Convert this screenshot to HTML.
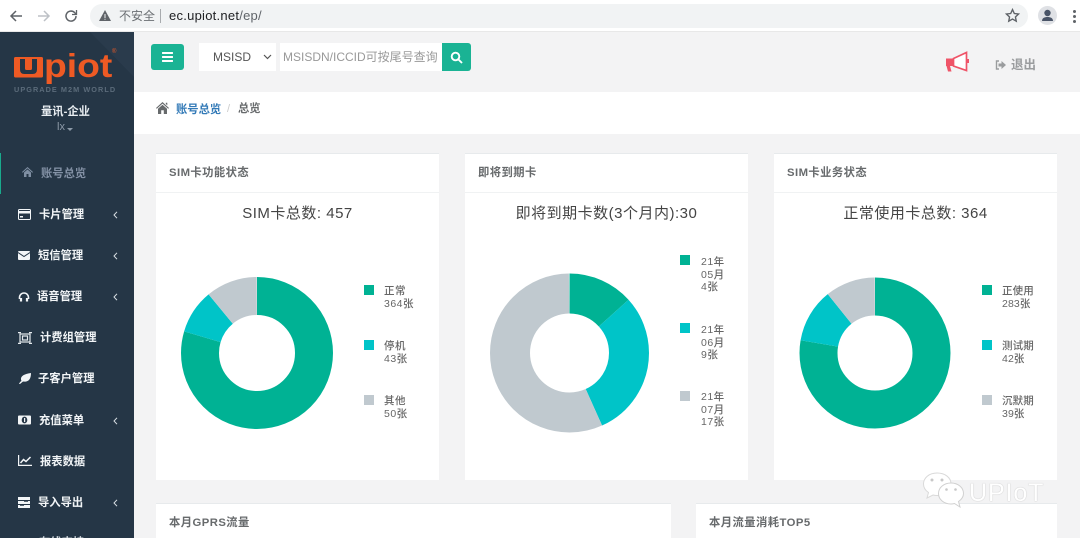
<!DOCTYPE html>
<html lang="zh"><head><meta charset="utf-8"><title>UPIoT</title>
<style>
html,body{margin:0;padding:0;width:1080px;height:538px;overflow:hidden;background:#f3f3f4;font-family:"Liberation Sans","Noto Sans CJK SC",sans-serif;}
#root{position:absolute;left:0;top:0;width:1080px;height:538px;overflow:hidden;background:#f3f3f4}
.a{position:absolute;white-space:nowrap;line-height:1}
#chrome{position:absolute;left:0;top:0;width:1080px;height:32px;background:#fff;border-bottom:1px solid #e8e8e8;box-sizing:border-box}
#url{position:absolute;left:90px;top:4px;width:938px;height:24px;border-radius:12px;background:#f1f3f4}
#side{position:absolute;left:0;top:32px;width:134px;height:506px;background:#253646;overflow:hidden}
.m{position:absolute;color:#f2f5f7;font-size:11.3px;font-weight:bold;line-height:14px;white-space:nowrap}
.card{position:absolute;background:#fff;border-top:1px solid #e7eaec;box-sizing:border-box}
.h{position:absolute;left:13px;top:12px;font-size:11.3px;font-weight:bold;color:#676a6c;line-height:14px;white-space:nowrap;letter-spacing:.45px}
.l{position:absolute;left:0;right:0;top:38px;height:1px;background:#f0f2f3}
.t{position:absolute;left:0;width:100%;text-align:center;top:50px;font-size:15px;color:#444;line-height:20px;white-space:nowrap;letter-spacing:.5px}
.sq{position:absolute;width:10px;height:10px}
.lg{position:absolute;font-size:10.5px;line-height:12.6px;color:#666;white-space:nowrap;letter-spacing:.5px;font-weight:500}
.ic{position:absolute}
</style></head><body>
<div id="root">
<div id="chrome">
<svg class="ic" style="left:8px;top:8px" width="16" height="16" viewBox="0 0 16 16" fill="none" stroke="#5f6368" stroke-width="1.5"><path d="M14 8H3M8 3 3 8l5 5"/></svg>
<svg class="ic" style="left:36px;top:8px" width="16" height="16" viewBox="0 0 16 16" fill="none" stroke="#bdc1c6" stroke-width="1.5"><path d="M2 8h11M8 3l5 5-5 5"/></svg>
<svg class="ic" style="left:63px;top:8px" width="16" height="16" viewBox="0 0 16 16" fill="none" stroke="#5f6368" stroke-width="1.5"><path d="M13 8a5 5 0 1 1-1.500-3.500L13 6"/><path d="M13.500 2v4.500H9" stroke-width="1.300"/></svg>
<div id="url"></div>
<svg class="ic" style="left:99px;top:10px" width="12" height="11" viewBox="0 0 12 11"><path d="M6 0 12 11H0z" fill="#5f6368"/><path d="M5.500 4h1v4h-1zM5.500 8.700h1v1h-1z" fill="#f1f3f4"/></svg>
<div class="a" style="left:119px;top:10px;font-size:12px;color:#6b6f73">不安全</div>
<div class="a" style="left:160px;top:9px;width:1px;height:14px;background:#a8abae"></div>
<div class="a" style="left:169px;top:9px;font-size:13px;color:#202124;letter-spacing:.25px">ec.upiot.net<span style="color:#5f6368">/ep/</span></div>
<svg class="ic" style="left:1005px;top:8px" width="15" height="15" viewBox="0 0 24 24" fill="none" stroke="#5f6368" stroke-width="2.200"><path d="M12 2.500l2.900 6.300 6.800.8-5 4.700 1.300 6.800-6-3.400-6 3.400 1.300-6.800-5-4.700 6.800-.8z"/></svg>
<div class="a" style="left:1038px;top:6px;width:19px;height:19px;border-radius:50%;background:#dfe1e5"></div>
<svg class="ic" style="left:1040px;top:8px" width="15" height="15" viewBox="0 0 15 15"><circle cx="7.500" cy="5" r="3.200" fill="#4a5568"/><path d="M2 13c0-3 2.500-4 5.500-4s5.500 1 5.500 4z" fill="#4a5568"/></svg>
<div class="a" style="left:1073px;top:10px;width:3px;height:3px;border-radius:50%;background:#5f6368"></div>
<div class="a" style="left:1073px;top:15px;width:3px;height:3px;border-radius:50%;background:#5f6368"></div>
<div class="a" style="left:1073px;top:20px;width:3px;height:3px;border-radius:50%;background:#5f6368"></div>
</div>

<div id="side">
<svg class="ic" style="left:0;top:0" width="134" height="120"><path d="M90 0 134 45V0z" fill="#2a3b4c"/></svg>
<svg class="ic" style="left:14px;top:25px" width="30" height="21" viewBox="0 0 30 21"><rect width="29" height="20.500" rx="1.500" fill="#ee5a24"/><path d="M6 2v10.500q0 4.500 4.500 4.500h8q4.500 0 4.500-4.500V2h-5v9.500q0 1.500-1.500 1.500h-4q-1.500 0-1.500-1.500V2z" fill="#253646"/></svg>
<div class="a" style="left:44px;top:17px;font-size:33px;font-weight:bold;color:#ee5a24;transform:scaleX(1.13);transform-origin:left">piot</div>
<div class="a" style="left:112px;top:17px;font-size:6px;color:#ee5a24">®</div>
<div class="a" style="left:14px;top:54px;font-size:7.3px;font-weight:bold;color:#5b6b7a;letter-spacing:1.05px">UPGRADE M2M WORLD</div>
<div class="a" style="left:41px;top:75px;font-size:11.3px;font-weight:bold;color:#e8edf1">量讯-企业</div>
<div class="a" style="left:57px;top:90px;font-size:11px;color:#8d9aa8">lx</div>
<div class="a" style="left:67px;top:96px;width:0;height:0;border:3px solid transparent;border-top-color:#8d9aa8"></div>

<div class="a" style="left:0;top:121px;width:1px;height:41px;background:#19aa8d"></div>
<svg class="ic" style="left:22px;top:135px" width="11" height="10" viewBox="0 0 11 10" fill="#7f8fa3"><path d="M5.500 0 11 5l-.7.700-4.800-4.300L.7 5.700 0 5zM2 5.500 5.500 2.500 9 5.500V10H6.500V7h-2v3H2z"/></svg>
<div class="m" style="left:41px;top:135px;color:#8492a6">账号总览</div>

<svg class="ic" style="left:18px;top:177px" width="13" height="11" viewBox="0 0 13 11"><rect x=".5" y=".5" width="12" height="10" rx="1" fill="#253646" stroke="#f2f5f7"/><rect x="0" y="2" width="13" height="2.500" fill="#f2f5f7"/><rect x="2" y="7" width="3" height="1.500" fill="#f2f5f7"/></svg>
<div class="m" style="left:39px;top:176px">卡片管理</div>
<svg class="ic" style="left:113px;top:179px" width="5" height="8" viewBox="0 0 5 8" fill="none" stroke="#d9dfe4" stroke-width="1"><path d="M4 .8 1 4l3 3.200"/></svg>

<svg class="ic" style="left:18px;top:219px" width="12" height="9" viewBox="0 0 12 9"><rect width="12" height="9" rx="1" fill="#f2f5f7"/><path d="M0 1.500 6 5.500 12 1.500" fill="none" stroke="#253646" stroke-width="1"/></svg>
<div class="m" style="left:38px;top:217px">短信管理</div>
<svg class="ic" style="left:113px;top:220px" width="5" height="8" viewBox="0 0 5 8" fill="none" stroke="#d9dfe4" stroke-width="1"><path d="M4 .8 1 4l3 3.200"/></svg>

<svg class="ic" style="left:18px;top:260px" width="12" height="10" viewBox="0 0 12 10" fill="none" stroke="#f2f5f7" stroke-width="1.600"><path d="M1.500 7V5.500a4.500 4.500 0 0 1 9 0V7"/><path d="M3 6v3.500M9 6v3.500" stroke-width="2.200"/></svg>
<div class="m" style="left:37px;top:258px">语音管理</div>
<svg class="ic" style="left:113px;top:261px" width="5" height="8" viewBox="0 0 5 8" fill="none" stroke="#d9dfe4" stroke-width="1"><path d="M4 .8 1 4l3 3.200"/></svg>

<svg class="ic" style="left:18px;top:300px" width="14" height="12" viewBox="0 0 14 12" fill="none" stroke="#e4e9ed" stroke-width="1.200"><rect x="2" y="2" width="10" height="8"/><rect x="4.500" y="4" width="5" height="4"/><path d="M0 .6h3M11 .6h3M0 11.400h3M11 11.400h3" stroke-width="1.200"/></svg>
<div class="m" style="left:40px;top:299px">计费组管理</div>

<svg class="ic" style="left:19px;top:341px" width="12" height="11" viewBox="0 0 12 11"><path d="M0 11C1 9 1.500 8.500 2.500 8 .5 4 4 1 12 0c0 6-2.500 9.500-8 8.500L1 11z" fill="#f2f5f7"/></svg>
<div class="m" style="left:38px;top:340px">子客户管理</div>

<svg class="ic" style="left:18px;top:383px" width="13" height="10" viewBox="0 0 13 10"><rect width="13" height="9" y=".5" rx="1" fill="#f2f5f7"/><ellipse cx="6.500" cy="5" rx="2.800" ry="3.400" fill="#253646"/><rect x="6" y="3" width="1.200" height="4" fill="#f2f5f7"/></svg>
<div class="m" style="left:39px;top:382px">充值菜单</div>
<svg class="ic" style="left:113px;top:385px" width="5" height="8" viewBox="0 0 5 8" fill="none" stroke="#d9dfe4" stroke-width="1"><path d="M4 .8 1 4l3 3.200"/></svg>

<svg class="ic" style="left:18px;top:423px" width="14" height="11" viewBox="0 0 14 11" fill="none" stroke="#f2f5f7" stroke-width="1.200"><path d="M.6 0v10.400H14"/><path d="M2.500 8 5.500 4.500 8 6.500 12.500 2" stroke-width="1.500"/></svg>
<div class="m" style="left:40px;top:423px">报表数据</div>

<svg class="ic" style="left:18px;top:465px" width="12" height="11" viewBox="0 0 12 11" fill="#f2f5f7"><rect width="12" height="3"/><rect y="4" width="12" height="3"/><rect y="8" width="12" height="3"/><path d="M6 4.500h4M2 8.500h4" stroke="#253646" stroke-width=".8"/></svg>
<div class="m" style="left:38px;top:464px">导入导出</div>
<svg class="ic" style="left:113px;top:467px" width="5" height="8" viewBox="0 0 5 8" fill="none" stroke="#d9dfe4" stroke-width="1"><path d="M4 .8 1 4l3 3.200"/></svg>
<div class="m" style="left:39px;top:504px;color:#cfd6dc">在线支持</div>
</div>

<!-- top bar -->
<div class="a" style="left:151px;top:44px;width:33px;height:26px;background:#1ab394;border-radius:3px"></div>
<svg class="ic" style="left:162px;top:52px" width="11" height="10" viewBox="0 0 11 10" fill="#fff"><rect width="11" height="2" rx=".5"/><rect y="4" width="11" height="2" rx=".5"/><rect y="8" width="11" height="2" rx=".5"/></svg>
<div class="a" style="left:199px;top:43px;width:77px;height:28px;background:#fff"></div>
<div class="a" style="left:213px;top:51px;font-size:12px;color:#555">MSISD</div>
<svg class="ic" style="left:263px;top:54px" width="9" height="6" viewBox="0 0 9 6" fill="none" stroke="#555" stroke-width="1.200"><path d="M1 1l3.500 3.500L8 1"/></svg>
<div class="a" style="left:280px;top:43px;width:162px;height:28px;background:#fff"></div>
<div class="a" style="left:283px;top:51px;font-size:12px;color:#999">MSISDN/ICCID可按尾号查询</div>
<div class="a" style="left:442px;top:43px;width:29px;height:28px;background:#1ab394;border-radius:0 3px 3px 0"></div>
<svg class="ic" style="left:450px;top:51px" width="13" height="13" viewBox="0 0 13 13" fill="none" stroke="#fff" stroke-width="1.900"><circle cx="5.500" cy="5.500" r="3.800"/><path d="M8.500 8.500 12 12"/></svg>

<svg class="ic" style="left:945px;top:50px" width="26" height="24" viewBox="0 0 26 24"><path d="M1 8.500h7.500V16H5l1.500 5.500H3L1.500 16H1z" fill="#ef5468"/><path d="M8.500 8.500 21.500 2.500v18L8.500 16z" fill="#fff" stroke="#ef5468" stroke-width="1.700"/><path d="M22 9h2v4h-2z" fill="#ef5468"/></svg>
<svg class="ic" style="left:995px;top:60px" width="11" height="10" viewBox="0 0 11 10"><path d="M4 1H1.500v8H4" fill="none" stroke="#9a9c9e" stroke-width="1.400"/><path d="M3.500 3.500H6.500V1L11 5 6.500 9V6.500H3.500z" fill="#9a9c9e"/></svg>
<div class="a" style="left:1011px;top:59px;font-size:12.5px;font-weight:bold;color:#9a9c9e">退出</div>

<!-- breadcrumb -->
<div class="a" style="left:134px;top:92px;width:946px;height:42px;background:#fff"></div>
<svg class="ic" style="left:156px;top:102px" width="13" height="12" viewBox="0 0 13 12" fill="#676a6c"><path d="M6.500 0 13 6l-.8.800L6.500 1.600.8 6.800 0 6zM2 6.700 6.500 2.700 11 6.700V12H7.800V8.300H5.200V12H2zM9.800 .8h1.500v2.500L9.800 2z"/></svg>
<div class="a" style="left:176px;top:102px;font-size:11.3px;font-weight:bold;color:#337ab7;line-height:12px;margin-top:0;transform:translateY(2px)">账号总览</div>
<div class="a" style="left:227px;top:104px;font-size:11px;color:#ccc">/</div>
<div class="a" style="left:238px;top:104px;font-size:11.3px;font-weight:bold;color:#676a6c">总览</div>

<!-- cards -->
<div class="card" style="left:156px;top:153px;width:283px;height:327px"><div class="h">SIM卡功能状态</div><div class="l"></div><div class="t">SIM卡总数: 457</div></div>
<div class="card" style="left:465px;top:153px;width:283px;height:327px"><div class="h">即将到期卡</div><div class="l"></div><div class="t">即将到期卡数(3个月内):30</div></div>
<div class="card" style="left:774px;top:153px;width:283px;height:327px"><div class="h">SIM卡业务状态</div><div class="l"></div><div class="t">正常使用卡总数: 364</div></div>
<div class="card" style="left:156px;top:503px;width:515px;height:35px"><div class="h">本月GPRS流量</div></div>
<div class="card" style="left:696px;top:503px;width:361px;height:35px"><div class="h">本月流量消耗TOP5</div></div>

<svg class="ic" style="left:0;top:0" width="1080" height="538" fill="none">
<g transform="rotate(-90 257 353)" stroke-width="38">
<circle cx="257" cy="353" r="57" stroke="#00b294" pathLength="457" stroke-dasharray="364 457"/>
<circle cx="257" cy="353" r="57" stroke="#00c4c8" pathLength="457" stroke-dasharray="43 457" stroke-dashoffset="-364"/>
<circle cx="257" cy="353" r="57" stroke="#c0c9cf" pathLength="457" stroke-dasharray="50 457" stroke-dashoffset="-407"/>
</g>
<g transform="rotate(-90 569.500 353)" stroke-width="40">
<circle cx="569.500" cy="353" r="59.500" stroke="#00b294" pathLength="30" stroke-dasharray="4 30"/>
<circle cx="569.500" cy="353" r="59.500" stroke="#00c4c8" pathLength="30" stroke-dasharray="9 30" stroke-dashoffset="-4"/>
<circle cx="569.500" cy="353" r="59.500" stroke="#c0c9cf" pathLength="30" stroke-dasharray="17 30" stroke-dashoffset="-13"/>
</g>
<g transform="rotate(-90 875 353)" stroke-width="38">
<circle cx="875" cy="353" r="56.500" stroke="#00b294" pathLength="364" stroke-dasharray="283 364"/>
<circle cx="875" cy="353" r="56.500" stroke="#00c4c8" pathLength="364" stroke-dasharray="42 364" stroke-dashoffset="-283"/>
<circle cx="875" cy="353" r="56.500" stroke="#c0c9cf" pathLength="364" stroke-dasharray="39 364" stroke-dashoffset="-325"/>
</g>
</svg>

<div class="sq" style="left:364px;top:285px;background:#00b294"></div><div class="lg" style="left:384px;top:285px">正常<br>364张</div>
<div class="sq" style="left:364px;top:340px;background:#00c4c8"></div><div class="lg" style="left:384px;top:340px">停机<br>43张</div>
<div class="sq" style="left:364px;top:395px;background:#c0c9cf"></div><div class="lg" style="left:384px;top:395px">其他<br>50张</div>

<div class="sq" style="left:680px;top:255px;background:#00b294"></div><div class="lg" style="left:701px;top:256px">21年<br>05月<br>4张</div>
<div class="sq" style="left:680px;top:323px;background:#00c4c8"></div><div class="lg" style="left:701px;top:324px">21年<br>06月<br>9张</div>
<div class="sq" style="left:680px;top:391px;background:#c0c9cf"></div><div class="lg" style="left:701px;top:391px">21年<br>07月<br>17张</div>

<div class="sq" style="left:982px;top:285px;background:#00b294"></div><div class="lg" style="left:1002px;top:285px;letter-spacing:.1px">正使用<br>283张</div>
<div class="sq" style="left:982px;top:340px;background:#00c4c8"></div><div class="lg" style="left:1002px;top:340px;letter-spacing:.1px">测试期<br>42张</div>
<div class="sq" style="left:982px;top:395px;background:#c0c9cf"></div><div class="lg" style="left:1002px;top:395px;letter-spacing:.1px">沉默期<br>39张</div>

<!-- watermark -->
<svg class="ic" style="left:922px;top:472px" width="44" height="36" viewBox="0 0 44 36">
<path d="M15 1C7 1 1.500 6 1.500 12c0 3.500 2 6.500 5 8.500L5 26l6-3c1.500.4 2.800.5 4 .5 8 0 14-5 14-11.500S23 1 15 1z" fill="#fff" stroke="#d9d9d9"/>
<circle cx="10" cy="8" r="1.500" fill="#c8c8c8"/><circle cx="20" cy="8" r="1.500" fill="#c8c8c8"/>
<path d="M29 11c-7 0-12.500 4.500-12.500 10.500S22 32 29 32c1.500 0 2.500-.2 3.500-.5L38 35l-1.500-5.500c3-2 5-4.800 5-8C41.500 15.500 36 11 29 11z" fill="#fff" stroke="#d0d0d0"/>
<circle cx="24.500" cy="17.500" r="1.300" fill="#c8c8c8"/><circle cx="33.500" cy="17.500" r="1.300" fill="#c8c8c8"/>
</svg>
<div class="a" style="left:969px;top:481px;font-size:25px;color:#fff;letter-spacing:.9px;text-shadow:0 0 1px #aaa;line-height:25px">UPIoT</div>
</div>
</body></html>
